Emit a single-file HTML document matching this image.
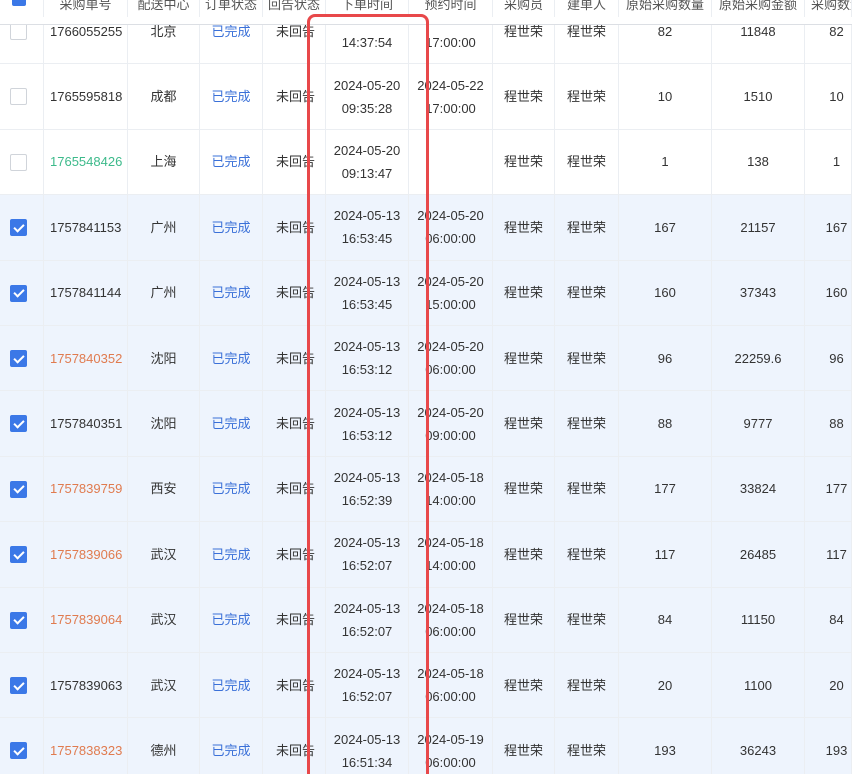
<!DOCTYPE html>
<html style="width:852px;height:774px;overflow:hidden"><head><meta charset="utf-8"><style>
*{margin:0;padding:0;box-sizing:border-box}
body{width:852px;height:774px;overflow:hidden;background:#fff;font-family:"Liberation Sans","Noto Sans CJK SC",sans-serif;font-size:13px;color:#333;position:relative}
.row{position:absolute;left:0;width:852px;height:65.33px;border-bottom:1px solid #ebeef2}
.row.sel{background:#eef4fd}
.c{position:absolute;top:0;height:100%;display:flex;align-items:center;justify-content:center;text-align:center;line-height:23px;border-right:1px solid #ebeef2}
.cb{position:absolute;left:10px;top:24px;width:17px;height:17px;border:1px solid #d0d4da;border-radius:2px;background:#fff}
.cb.on{background:#3b78e7;border-color:#3b78e7}
.cb.on:after{content:"";position:absolute;left:5px;top:1.5px;width:4px;height:8px;border:solid #fff;border-width:0 2px 2px 0;transform:rotate(45deg)}
.g{color:#3dba8b}.o{color:#e07b4f}.b{color:#3a70d8}
.hdr{position:absolute;left:0;top:0;width:852px;height:25px;background:#fff;border-bottom:1px solid #dcdfe4;z-index:2;overflow:hidden}
.hdr .c{align-items:flex-start;top:-7px;color:#555}
.wrap{position:absolute;left:0;top:0;width:852px;height:774px;overflow:hidden}
.red{position:absolute;left:307px;top:14px;width:122px;height:760px;border:3px solid #e8484a;border-bottom:0;border-radius:8px 8px 0 0;z-index:3}
</style></head><body>
<div class="wrap">
<div class="hdr">
<div style="position:absolute;left:12px;top:-8px;width:14px;height:14px;background:#3b78e7;border-radius:2px"></div>
<div class="c" style="left:0;width:44px"></div>
<div class="c" style="left:44px;width:84px">采购单号</div>
<div class="c" style="left:128px;width:72px">配送中心</div>
<div class="c" style="left:200px;width:63px">订单状态</div>
<div class="c" style="left:263px;width:63px">回告状态</div>
<div class="c" style="left:326px;width:83px">下单时间</div>
<div class="c" style="left:409px;width:84px">预约时间</div>
<div class="c" style="left:493px;width:62px">采购员</div>
<div class="c" style="left:555px;width:64px">建单人</div>
<div class="c" style="left:619px;width:93px">原始采购数量</div>
<div class="c" style="left:712px;width:93px">原始采购金额</div>
<div class="c" style="left:805px;width:47px;justify-content:flex-start;padding-left:6px;overflow:hidden;white-space:nowrap">采购数量</div>
</div>
<div id="rows"></div>
<div class="red"></div>
</div>
<script>
var d=[
["1766055255","","北京",0,"2024-05-20<br>14:37:54","2024-05-22<br>17:00:00","82","11848"],
["1765595818","","成都",0,"2024-05-20<br>09:35:28","2024-05-22<br>17:00:00","10","1510"],
["1765548426","g","上海",0,"2024-05-20<br>09:13:47","","1","138"],
["1757841153","","广州",1,"2024-05-13<br>16:53:45","2024-05-20<br>06:00:00","167","21157"],
["1757841144","","广州",1,"2024-05-13<br>16:53:45","2024-05-20<br>15:00:00","160","37343"],
["1757840352","o","沈阳",1,"2024-05-13<br>16:53:12","2024-05-20<br>06:00:00","96","22259.6"],
["1757840351","","沈阳",1,"2024-05-13<br>16:53:12","2024-05-20<br>09:00:00","88","9777"],
["1757839759","o","西安",1,"2024-05-13<br>16:52:39","2024-05-18<br>14:00:00","177","33824"],
["1757839066","o","武汉",1,"2024-05-13<br>16:52:07","2024-05-18<br>14:00:00","117","26485"],
["1757839064","o","武汉",1,"2024-05-13<br>16:52:07","2024-05-18<br>06:00:00","84","11150"],
["1757839063","","武汉",1,"2024-05-13<br>16:52:07","2024-05-18<br>06:00:00","20","1100"],
["1757838323","o","德州",1,"2024-05-13<br>16:51:34","2024-05-19<br>06:00:00","193","36243"]];
var h="";
d.forEach(function(r,i){
var t=-1+65.4*i;
h+='<div class="row'+(r[3]?' sel':'')+'" style="top:'+t+'px">'+
'<div class="c" style="left:0;width:44px"><span class="cb'+(r[3]?' on':'')+'"></span></div>'+
'<div class="c '+r[1]+'" style="left:44px;width:84px;justify-content:flex-start;padding-left:6px">'+r[0]+'</div>'+
'<div class="c" style="left:128px;width:72px">'+r[2]+'</div>'+
'<div class="c b" style="left:200px;width:63px">已完成</div>'+
'<div class="c" style="left:263px;width:63px;justify-content:flex-start;padding-left:13px">未回告</div>'+
'<div class="c" style="left:326px;width:83px">'+r[4]+'</div>'+
'<div class="c" style="left:409px;width:84px">'+r[5]+'</div>'+
'<div class="c" style="left:493px;width:62px">程世荣</div>'+
'<div class="c" style="left:555px;width:64px">程世荣</div>'+
'<div class="c" style="left:619px;width:93px">'+r[6]+'</div>'+
'<div class="c" style="left:712px;width:93px">'+r[7]+'</div>'+
'<div class="c" style="left:805px;width:47px;padding-left:17px;white-space:nowrap">'+r[6]+'</div></div>';
});
document.getElementById("rows").innerHTML=h;
</script>
</body></html>
